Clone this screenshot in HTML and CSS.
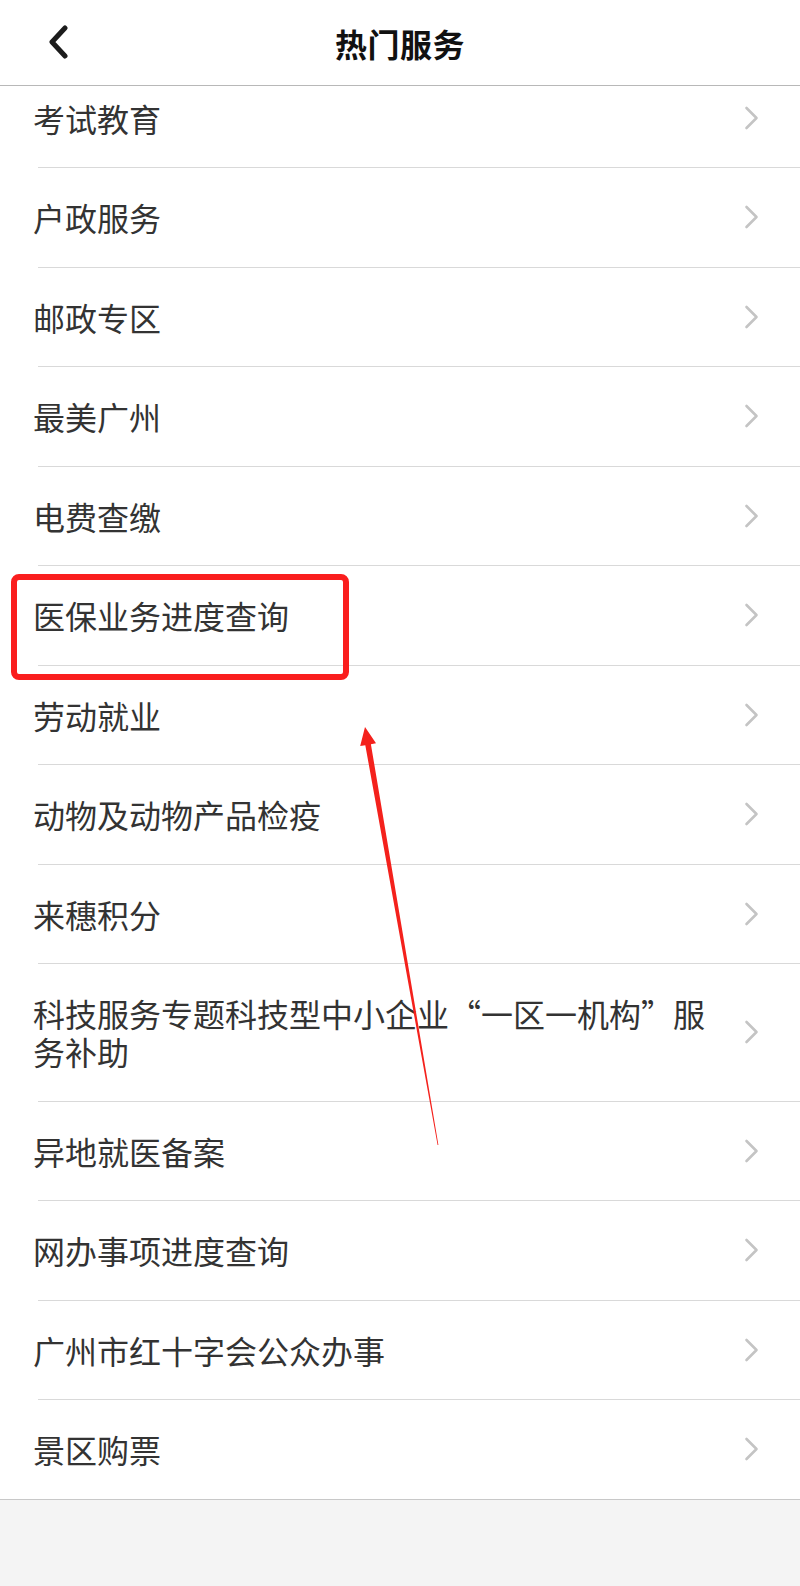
FILE: index.html
```html
<!DOCTYPE html>
<html>
<head>
    <meta charset="UTF-8">
    <link rel="stylesheet" href="styles.css">
</head>
<body>
    <div class="page">
        <div class="header">
            <span class="back">
                <svg width="24" height="34" viewBox="0 0 24 34"><polyline points="19,3 6,17 19,31" fill="none" stroke="#1c1c1c" stroke-width="5" stroke-linecap="round" stroke-linejoin="round"/></svg>
            </span>
            <div class="title">热门服务</div>
        </div>

        <div class="list-view">
            <div class="list">
                <div class="row"><span class="row-label">考试教育</span><span class="arrow"></span></div>
                <div class="row"><span class="row-label">户政服务</span><span class="arrow"></span></div>
                <div class="row"><span class="row-label">邮政专区</span><span class="arrow"></span></div>
                <div class="row"><span class="row-label">最美广州</span><span class="arrow"></span></div>
                <div class="row"><span class="row-label">电费查缴</span><span class="arrow"></span></div>
                <div class="row"><span class="row-label">医保业务进度查询</span><span class="arrow"></span></div>
                <div class="row"><span class="row-label">劳动就业</span><span class="arrow"></span></div>
                <div class="row"><span class="row-label">动物及动物产品检疫</span><span class="arrow"></span></div>
                <div class="row"><span class="row-label">来穗积分</span><span class="arrow"></span></div>
                <div class="row"><span class="row-label">科技服务专题科技型中小企业“一区一机构”服务补助</span><span class="arrow"></span></div>
                <div class="row"><span class="row-label">异地就医备案</span><span class="arrow"></span></div>
                <div class="row"><span class="row-label">网办事项进度查询</span><span class="arrow"></span></div>
                <div class="row"><span class="row-label">广州市红十字会公众办事</span><span class="arrow"></span></div>
                <div class="row row-last"><span class="row-label">景区购票</span><span class="arrow"></span></div>
            </div>
        </div>

        <div class="footer-space"></div>

        <!-- 标注：红框 + 箭头 -->
        <div class="mark-box"></div>
        <svg class="mark-arrow" width="800" height="1586" viewBox="0 0 800 1586">
            <polygon points="365,727 376,743.3 370.9,744.2 438.4,1145 437.6,1145.1 365.3,745.2 360.2,746.1" fill="#f4211c"/>
        </svg>
    </div>
</body>
</html>
```

FILE: styles.css
```css
body {
    margin: 0;
    background-color: #ffffff;
    font-family: "Noto Sans CJK SC", "Noto Sans", sans-serif;
}

.page {
    position: relative;
    width: 800px;
    height: 1586px;
    overflow: hidden;
    display: flex;
    flex-direction: column;
    background-color: #f4f4f4;
}

.header {
    height: 85px;
    flex-shrink: 0;
    display: flex;
    align-items: center;
    justify-content: center;
    background-color: #ffffff;
    border-bottom: 1px solid #b8b8b8;
    position: relative;
}

.back {
    position: absolute;
    left: 46px;
    top: 25px;
    display: flex;
}

.title {
    font-size: 32px;
    font-weight: 700;
    color: #111111;
    letter-spacing: 0.5px;
}

/* 列表被滚动过一点，第一行顶部被遮住 */
.list-view {
    overflow: hidden;
    flex-shrink: 0;
    background-color: #ffffff;
}

.list {
    margin-top: -17.5px;
}

.row {
    display: flex;
    align-items: center;
    padding: 30.25px 41px 30.25px 33px;
    border-bottom: 1px solid transparent;
    background: linear-gradient(#d9d9d9, #d9d9d9) no-repeat 38px 100% / calc(100% - 38px) 1px;
    background-origin: border-box;
    background-clip: border-box;
}

.row-last {
    background: none;
    border-bottom: 1px solid #c8c8c8;
}

.row-label {
    flex: 1;
    max-width: 690px;
    font-size: 32px;
    line-height: 38px;
    color: #333333;
}

.arrow {
    margin-left: auto;
    flex-shrink: 0;
    width: 15px;
    height: 24px;
    background: url("data:image/svg+xml;utf8,<svg xmlns='http://www.w3.org/2000/svg' width='15' height='24' viewBox='0 0 15 24'><polyline points='2.5,2 12.5,12 2.5,22' fill='none' stroke='%23c4c4c4' stroke-width='2.6' stroke-linecap='round' stroke-linejoin='round'/></svg>") no-repeat center;
}

.footer-space {
    flex: 1;
    background-color: #f4f4f4;
}

.mark-box {
    position: absolute;
    left: 11px;
    top: 574px;
    width: 326px;
    height: 94px;
    border: 6px solid #fa1e1e;
    border-radius: 8px;
}

.mark-arrow {
    position: absolute;
    left: 0;
    top: 0;
    pointer-events: none;
}
```
